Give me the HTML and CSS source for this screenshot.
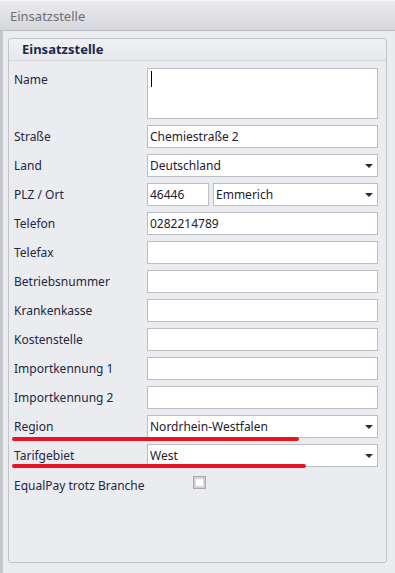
FILE: index.html
```html
<!DOCTYPE html>
<html lang="de">
<head>
  <meta charset="UTF-8" />
  <title>Einsatzstelle</title>
  <link rel="stylesheet" href="styles.css">
</head>
<body>
  <div class="title-bar">Einsatzstelle</div>
  <div class="content">
    <div class="group">
      <div class="group-header">Einsatzstelle</div>
      <div class="form">
        <div class="row row-tall">
          <label>Name</label>
          <div class="field field-tall"><span class="caret"></span></div>
        </div>
        <div class="row">
          <label>Straße</label>
          <div class="field">Chemiestraße 2</div>
        </div>
        <div class="row">
          <label>Land</label>
          <div class="field combo">Deutschland<span class="arrow"></span></div>
        </div>
        <div class="row">
          <label>PLZ / Ort</label>
          <div class="split">
            <div class="field">46446</div>
            <div class="field combo">Emmerich<span class="arrow"></span></div>
          </div>
        </div>
        <div class="row">
          <label>Telefon</label>
          <div class="field">0282214789</div>
        </div>
        <div class="row">
          <label>Telefax</label>
          <div class="field"></div>
        </div>
        <div class="row">
          <label>Betriebsnummer</label>
          <div class="field"></div>
        </div>
        <div class="row">
          <label>Krankenkasse</label>
          <div class="field"></div>
        </div>
        <div class="row">
          <label>Kostenstelle</label>
          <div class="field"></div>
        </div>
        <div class="row">
          <label>Importkennung 1</label>
          <div class="field"></div>
        </div>
        <div class="row">
          <label>Importkennung 2</label>
          <div class="field"></div>
        </div>
        <div class="row marked">
          <label>Region</label>
          <div class="field combo">Nordrhein-Westfalen<span class="arrow"></span></div>
          <span class="mark mark-region"></span>
        </div>
        <div class="row marked">
          <label>Tarifgebiet</label>
          <div class="field combo">West<span class="arrow"></span></div>
          <span class="mark mark-tarif"></span>
        </div>
        <div class="row row-check">
          <label>EqualPay trotz Branche</label>
          <span class="checkbox"></span>
        </div>
      </div>
    </div>
  </div>
</body>
</html>
```

FILE: styles.css
```css
body {
  margin: 0;
  font-family: 'Noto Sans', 'Open Sans', sans-serif;
  font-size: 12px;
  background-color: #ebecf0;
  color: #23273f;
  width: 395px;
  height: 573px;
  overflow: hidden;
}

.title-bar {
  height: 31px;
  line-height: 30px;
  padding-left: 10px;
  font-size: 13px;
  color: #6e6e74;
  background: linear-gradient(#ebebef, #d6d7db);
  border-top: 1px solid #f6f6f8;
  border-bottom: 1px solid #b9babf;
  box-sizing: border-box;
}

.content {
  border-left: 3px solid #c6c7cc;
  padding: 7px 8px 0 5px;
  height: 542px;
}

.group {
  border: 1px solid #c3c4c9;
  border-radius: 3px;
  height: 525px;
  box-sizing: border-box;
  background-color: #ebecf0;
}

.group-header {
  height: 21px;
  line-height: 21px;
  padding-left: 13px;
  font-size: 13px;
  font-weight: bold;
  color: #1b2a4e;
  background: linear-gradient(#f0f1f4, #e8e9ed);
  border-bottom: 1px solid #d5d6db;
  border-radius: 3px 3px 0 0;
}

.form {
  padding: 7px 7px 0 5px;
  display: flex;
  flex-direction: column;
  gap: 6px;
}

.row {
  display: grid;
  grid-template-columns: 133px 231px;
  height: 23px;
  align-items: center;
}

.row-tall {
  height: 51px;
  align-items: start;
  margin-bottom: 0;
}

.row-tall label {
  padding-top: 3px;
}

.field {
  height: 23px;
  box-sizing: border-box;
  border: 1px solid #bdbec3;
  background-color: #fff;
  padding-left: 2px;
  line-height: 20px;
  color: #1e2030;
  display: flex;
  align-items: center;
}

.field-tall {
  height: 51px;
  align-items: flex-start;
}

.caret {
  width: 1px;
  height: 16px;
  margin-top: 2px;
  margin-left: 1px;
  border-left: 1px solid #000;
}

.combo {
  justify-content: space-between;
}

.arrow {
  width: 0;
  height: 0;
  margin-right: 4px;
  border-left: 4px solid transparent;
  border-right: 4px solid transparent;
  border-top: 4px solid #2c2c2c;
}

.split {
  display: grid;
  grid-template-columns: 62px 165px;
  gap: 4px;
}

.marked {
  position: relative;
}

.mark {
  position: absolute;
  left: -2px;
  top: 22px;
  height: 4px;
  border-radius: 2px;
  background-color: #e8141f;
}

.mark-region {
  width: 287px;
}

.mark-tarif {
  top: 20px;
  width: 294px;
}

.row-check {
  grid-template-columns: 179px 15px;
  margin-top: 1px;
}

.checkbox {
  width: 9px;
  height: 9px;
  border: 1px solid #a9aaae;
  box-shadow: inset 0 0 0 2px #cfd0d4;
  padding: 1px;
  background-color: #fff;
  background-clip: content-box;
  outline: 1px solid #d8d9dd;
  outline-offset: -3px;
  margin-top: -6px;
}
```
